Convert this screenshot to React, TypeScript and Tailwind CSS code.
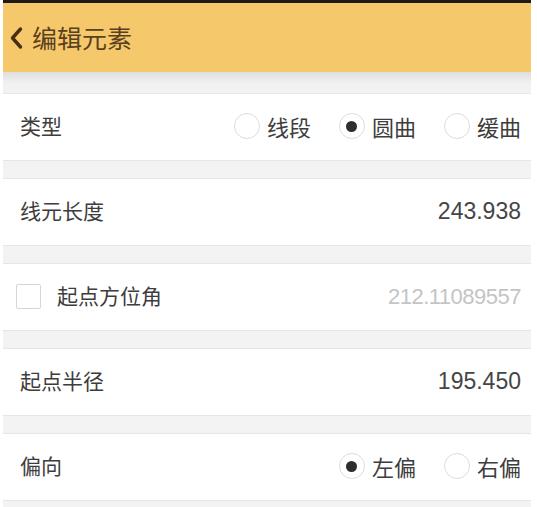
import React from "react";

const cjk = { fontFamily: '"Noto Sans CJK SC", "Noto Sans", sans-serif' };
const num = { fontFamily: '"Liberation Sans", "Noto Sans", sans-serif' };

const Radio = ({ label, checked }: { label: string; checked?: boolean }) => (
    <div className="flex flex-row items-center">
        <span className="flex items-center justify-center w-[26px] h-[26px] rounded-full border border-[#dcdcdc] bg-white">
            {checked && <span className="w-[11px] h-[11px] rounded-full bg-[#2e2e2e]" />}
        </span>
        <span className="ml-[7px] text-[22px] text-[#3d3d3d]">{label}</span>
    </div>
);

const Row = ({ children }: { children: React.ReactNode }) => (
    <div className="flex flex-row items-center justify-between h-[68px] bg-white border-y border-[#e6e6e6] pl-[17px] pr-[10px] pb-[2px]">
        {children}
    </div>
);

const Gap = () => <div className="h-[17px]" />;

const App = () => {
    return (
        <div className="w-[537px] h-[507px] bg-white overflow-hidden" style={cjk}>
            <div className="ml-[3px] w-[528px] h-full bg-[#f3f3f3]">
                <div className="h-[3px] bg-[#1f1a14]" />
                <div className="flex flex-row items-center h-[69px] bg-[#f5c96b] pl-[6px]">
                    <svg width="14" height="24" viewBox="0 0 14 24" className="mt-[1px]">
                        <path d="M11.5 3 L3.5 12 L11.5 21" fill="none" stroke="#4a2e12" strokeWidth="3.4" strokeLinecap="round" strokeLinejoin="round" />
                    </svg>
                    <span className="ml-[9px] text-[25px] text-[#5a4020]">编辑元素</span>
                </div>
                <div className="h-[21px] bg-gradient-to-b from-[#dedede] via-[#f0f0f0] to-[#f3f3f3]" />
                <Row>
                    <span className="text-[21px] text-[#3d3d3d]">类型</span>
                    <div className="flex flex-row gap-[28px]">
                        <Radio label="线段" />
                        <Radio label="圆曲" checked />
                        <Radio label="缓曲" />
                    </div>
                </Row>
                <Gap />
                <Row>
                    <span className="text-[21px] text-[#3d3d3d]">线元长度</span>
                    <span className="text-[23px] text-[#454545]" style={num}>243.938</span>
                </Row>
                <Gap />
                <Row>
                    <div className="flex flex-row items-center -ml-[4px]">
                        <span className="w-[25px] h-[25px] border border-[#d6d6d6] rounded-[2px] bg-white" />
                        <span className="ml-[16px] text-[21px] text-[#3d3d3d]">起点方位角</span>
                    </div>
                    <span className="text-[22px] text-[#c4c4c4] tracking-[-0.5px]" style={num}>212.11089557</span>
                </Row>
                <Gap />
                <Row>
                    <span className="text-[21px] text-[#3d3d3d]">起点半径</span>
                    <span className="text-[23px] text-[#454545]" style={num}>195.450</span>
                </Row>
                <Gap />
                <Row>
                    <span className="text-[21px] text-[#3d3d3d]">偏向</span>
                    <div className="flex flex-row gap-[28px]">
                        <Radio label="左偏" checked />
                        <Radio label="右偏" />
                    </div>
                </Row>
            </div>
        </div>
    );
};

export default App;
